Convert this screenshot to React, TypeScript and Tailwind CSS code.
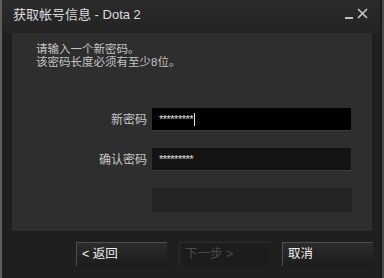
import React from "react";

const font = { fontFamily: '"Liberation Sans", "Noto Sans CJK SC", sans-serif' };

function Btn({ children, disabled }: { children: React.ReactNode; disabled?: boolean }) {
  return (
    <div
      className={
        "w-[91px] h-[24px] flex items-center pl-[5px] text-[12.5px] border-t border-l " +
        (disabled
          ? "bg-[#1c1c1c] border-[#2e2e2e] text-[#4a4a4a]"
          : "bg-gradient-to-b from-[#2c2c2c] to-[#1c1c1c] border-[#4e4e4e] text-[#f0f0f0]")
      }
    >
      {children}
    </div>
  );
}

export default function App() {
  return (
    <div style={font} className="w-[384px] h-[278px] flex bg-[#1f1f1f] overflow-hidden">
      <div className="w-[2px] bg-[#5e5e5e]" />
      <div className="flex-1 flex flex-col">
        <div className="h-[33px] flex items-start bg-gradient-to-b from-[#2b2b2b] to-[#232323] relative">
          <div className="pl-[11px] pt-[7px] text-[13px] text-[#dcdcdc] leading-[16px]">获取帐号信息 - Dota 2</div>
          <div className="absolute left-[343px] top-[17px] w-[8px] h-[2px] bg-[#bdbdbd]" />
          <svg className="absolute left-[355px] top-[8px]" width="11" height="11" viewBox="0 0 11 11">
            <path d="M1 1L10 10M10 1L1 10" stroke="#c8c8c8" strokeWidth="1.6" />
          </svg>
        </div>
        <div className="ml-[10px] w-[360px] h-[198px] bg-[#2e2e2e] flex flex-col">
          <div className="pl-[24px] pt-[10px] text-[11.5px] leading-[13px] text-[#c4c4c4]">
            <div>请输入一个新密码。</div>
            <div>该密码长度必须有至少8位。</div>
          </div>
          <div className="mt-[39px] flex items-center">
            <div className="w-[140px] text-right pr-[5px] text-[12px] text-[#c8c8c8]">新密码</div>
            <div className="w-[199px] h-[23px] bg-[#000] border-b border-[#3c3c3c] flex items-center pl-[7px] text-[11px] text-[#e0e0e0]">
              <span className="tracking-[-0.5px]">*********</span>
              <span className="ml-[1px] w-px h-[13px] bg-[#e0e0e0]" />
            </div>
          </div>
          <div className="mt-[17px] flex items-center">
            <div className="w-[140px] text-right pr-[5px] text-[12px] text-[#c8c8c8]">确认密码</div>
            <div className="w-[199px] h-[23px] bg-[#141414] border-b border-[#3c3c3c] flex items-center pl-[7px] text-[11px] text-[#e0e0e0]">
              <span className="tracking-[-0.5px]">*********</span>
            </div>
          </div>
          <div className="mt-[17px] flex">
            <div className="w-[140px]" />
            <div className="w-[200px] h-[24px] bg-[#242424]" />
          </div>
        </div>
        <div className="flex pt-[11px] pl-[74px] gap-[12px]">
          <Btn>&lt; 返回</Btn>
          <Btn disabled>下一步 &gt;</Btn>
          <Btn>取消</Btn>
        </div>
      </div>
      <div className="w-[2px] bg-[#1a1a1a]" />
      <div className="w-[2px] bg-[#4a4a4a]" />
    </div>
  );
}
